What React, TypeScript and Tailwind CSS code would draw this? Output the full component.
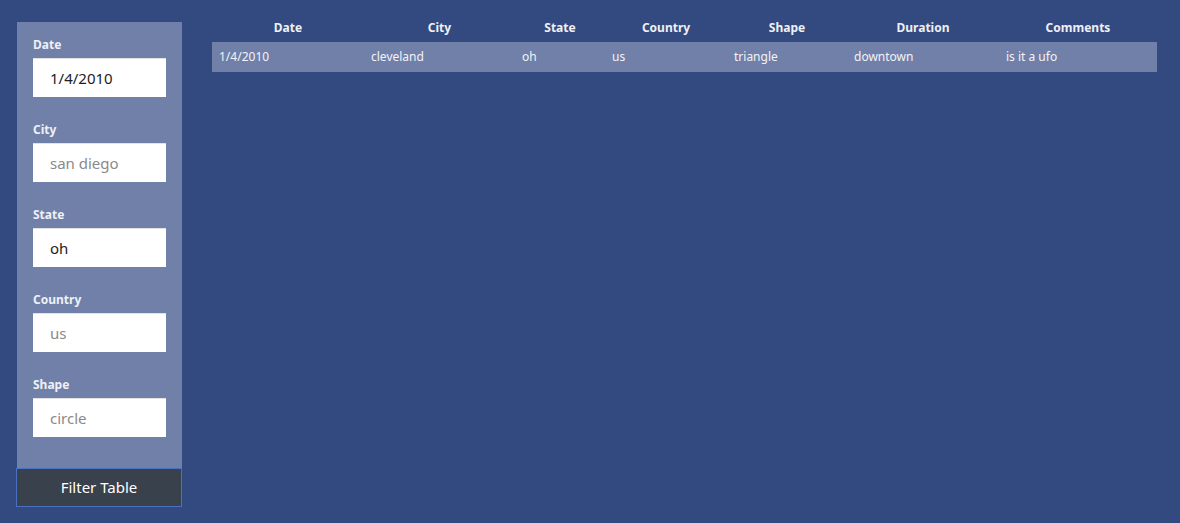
const filters = [
  { label: "Date", value: "1/4/2010", placeholder: "" },
  { label: "City", value: "", placeholder: "san diego" },
  { label: "State", value: "oh", placeholder: "" },
  { label: "Country", value: "", placeholder: "us" },
  { label: "Shape", value: "", placeholder: "circle" },
];

const columns = [
  { name: "Date", width: "w-[152px]" },
  { name: "City", width: "w-[151px]" },
  { name: "State", width: "w-[90px]" },
  { name: "Country", width: "w-[122px]" },
  { name: "Shape", width: "w-[120px]" },
  { name: "Duration", width: "w-[152px]" },
  { name: "Comments", width: "w-[158px]" },
];

const rows = [
  ["1/4/2010", "cleveland", "oh", "us", "triangle", "downtown", "is it a ufo"],
];

export default function App() {
  return (
    <div className="flex h-[523px] w-[1180px] gap-[30px] bg-[#334a80] pl-[17px] font-['Noto_Sans',sans-serif]">
      <aside className="flex w-[165px] flex-col pt-[22px]">
        <div className="flex h-[446px] flex-col gap-[25px] bg-[#7180a8] pl-4 pt-[15px]">
          {filters.map((f) => (
            <div key={f.label}>
              <label className="block text-[12px] font-bold leading-[16px] text-[#eef0f6]">
                {f.label}
              </label>
              <input
                readOnly
                defaultValue={f.value}
                placeholder={f.placeholder}
                className="mt-[5px] h-[39px] w-[133px] border-t border-[#e2e2e2] bg-white pl-[17px] text-[15px] text-[#222] placeholder:text-[#8a8a8a] outline-none"
              />
            </div>
          ))}
        </div>
        <button className="-ml-px h-[39px] w-[166px] border-[1.5px] border-[#4a72c0] bg-[#38414c] text-[15px] text-white">
          Filter Table
        </button>
      </aside>

      <main className="pt-[18px]">
        <table className="border-collapse text-[12px]">
          <thead>
            <tr className="h-[24px]">
              {columns.map((c) => (
                <th
                  key={c.name}
                  className={`${c.width} pt-[2px] text-center align-top font-bold leading-[16px] text-[#eef0f6]`}
                >
                  {c.name}
                </th>
              ))}
            </tr>
          </thead>
          <tbody>
            {rows.map((r, i) => (
              <tr key={i} className="h-[30px] bg-[#7180a8]">
                {r.map((cell, j) => (
                  <td key={j} className="pl-[7px] text-left text-[#f2f3f8]">
                    {cell}
                  </td>
                ))}
              </tr>
            ))}
          </tbody>
        </table>
      </main>
    </div>
  );
}
